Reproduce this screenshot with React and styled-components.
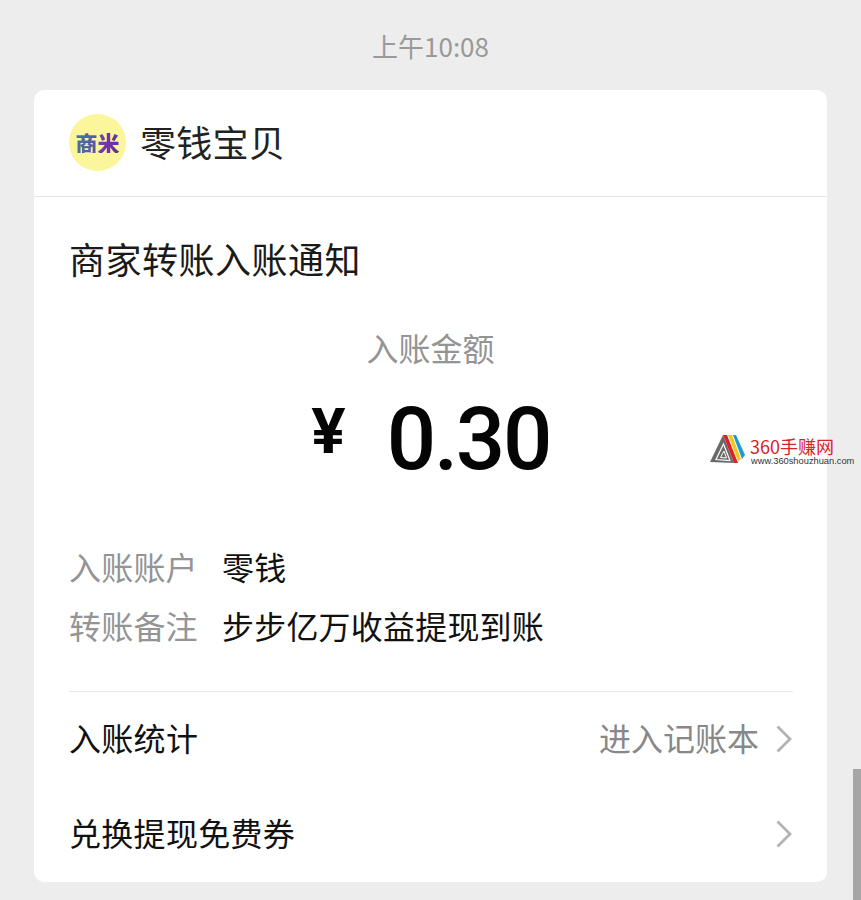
import React from "react";
import styled, { createGlobalStyle } from "styled-components";

const Global = createGlobalStyle`
  html, body { margin: 0; padding: 0; background: #ededed; }
  body { font-family: "Noto Sans CJK SC", "Noto Sans", sans-serif; overflow: hidden; }
  * { box-sizing: border-box; }
`;
const Page = styled.div`
  position: relative; width: 861px; height: 900px; overflow: hidden;
  background: #ededed; display: flex; flex-direction: column; padding: 0 34px;
`;
const Time = styled.div`
  height: 90px; padding-top: 26px; text-align: center; font-size: 26px; line-height: 40px;
  color: #999; font-weight: 400;
`;
const Card = styled.section`
  width: 793px; height: 792px; background: #fff; border-radius: 10px; display: flex; flex-direction: column;
`;
const Header = styled.header`
  height: 107px; display: flex; align-items: center; gap: 15px; padding: 0 35px 1px;
  border-bottom: 1px solid #e6e6e6;
`;
const Avatar = styled.div`
  width: 57px; height: 57px; border-radius: 50%; background: #fbf59b; display: flex;
  align-items: center; justify-content: center; font-size: 22px; font-weight: 900; line-height: 1;
  padding-bottom: 2px;
  span {
    background: linear-gradient(100deg, #3f7a99 0%, #5a57a8 45%, #7a2fa8 70%, #4a3aa0 100%);
    -webkit-background-clip: text; background-clip: text; color: transparent;
  }
`;
const Name = styled.div`
  font-size: 36px; line-height: 44px; color: #222; font-weight: 400; letter-spacing: 0.3px;
  margin-top: -3px; margin-left: -1px;
`;
const Body = styled.div`
  padding: 0 35px; display: flex; flex-direction: column; flex: 1;
`;
const Title = styled.h2`
  margin: 38px 0 0; font-size: 36px; line-height: 46px; font-weight: 400; color: #1a1a1a; height: 46px;
  letter-spacing: 0.5px;
`;
const AmountLabel = styled.div`
  margin-top: 43px; text-align: center; font-size: 32px; line-height: 46px; font-weight: 400; color: #949494;
`;
const Amount = styled.div`
  margin-top: 21px; height: 96px; display: flex; justify-content: center; align-items: center; color: #050505;
`;
const Yen = styled.span`
  font-family: Inter, "Liberation Sans", sans-serif;
  font-size: 62px; font-weight: 700; line-height: 1; width: 76px; position: relative; top: -8px;
`;
const Value = styled.span`
  font-family: Roboto, "Liberation Sans", sans-serif;
  font-size: 87px; font-weight: 500; line-height: 96px; letter-spacing: -2.2px;
`;
const Details = styled.dl`
  margin: 56px 0 0; display: grid; grid-template-columns: 153px 1fr; row-gap: 13px;
  font-size: 32px; line-height: 46px; letter-spacing: 0.2px;
  dt { color: #949494; font-weight: 400; }
  dd { margin: 0; color: #111; font-weight: 400; }
`;
const Divider = styled.hr`
  margin: 43px 0 0; border: 0; border-top: 1px solid #e8e8e8; width: 724px;
`;
const Row = styled.div`
  height: ${p => p.$h}px; display: flex; align-items: center; justify-content: space-between;
  font-size: 32px; color: #111; font-weight: 400; letter-spacing: 0.3px;
`;
const Right = styled.div`
  display: flex; align-items: center; gap: 17px; color: #888; letter-spacing: 0;
`;
const ChevronIcon = styled.svg`
  margin-top: 4px;
`;
const Chevron = () => (
  <ChevronIcon width="16" height="28" viewBox="0 0 16 28" fill="none">
    <path d="M1.5 1.5 L14 14 L1.5 26.5" stroke="#b3b3b3" strokeWidth="2.8" />
  </ChevronIcon>
);
const Scroll = styled.div`
  position: absolute; right: 0; top: 769px; width: 8px; height: 131px; background: #a6a6a6;
`;
const Mark = styled.div`
  position: absolute; left: 710px; top: 434px; display: flex; gap: 4px; align-items: flex-start;
`;
const MarkText = styled.div`
  display: flex; flex-direction: column; padding-top: 2px;
`;
const MarkTitle = styled.div`
  color: #d8232a; font-size: 18px; line-height: 20px;
  font-family: "Noto Sans CJK SC", sans-serif; font-weight: 400; white-space: nowrap;
`;
const MarkUrl = styled.div`
  color: #333; font-size: 9.3px; line-height: 11px; font-family: "Liberation Sans", sans-serif; margin-left: 1px; white-space: nowrap;
`;

export default function App() {
  return (
    <Page>
      <Global />
      <Time>上午10:08</Time>
      <Card>
        <Header>
          <Avatar><span>商米</span></Avatar>
          <Name>零钱宝贝</Name>
        </Header>
        <Body>
          <Title>商家转账入账通知</Title>
          <AmountLabel>入账金额</AmountLabel>
          <Amount><Yen>¥</Yen><Value>0.30</Value></Amount>
          <Details>
            <dt>入账账户</dt><dd>零钱</dd>
            <dt>转账备注</dt><dd>步步亿万收益提现到账</dd>
          </Details>
          <Divider />
          <Row $h={90}>入账统计<Right>进入记账本<Chevron /></Right></Row>
          <Row $h={100}>兑换提现免费券<Right><Chevron /></Right></Row>
        </Body>
      </Card>
      <Mark>
        <svg width="36" height="31" viewBox="0 0 36 31">
          <path d="M0 28 L13 1 L24 29 Z" fill="#6a6a6a" />
          <path d="M6 25.5 L13.5 10 L20 26.5 Z" fill="none" stroke="#fff" strokeWidth="1.2" />
          <path d="M10.5 23.5 L14 17 L16.5 24 Z" fill="none" stroke="#fff" strokeWidth="1" />
          <path d="M13 1 L17 1 L28 29 L24 29 Z" fill="#d8232a" />
          <path d="M18 1 L22 1 L31 25 L28 27 Z" fill="#f2c81e" />
          <path d="M23 1 L26 1 L35 21 L32 25 Z" fill="#1e9ad6" />
        </svg>
        <MarkText>
          <MarkTitle>360手赚网</MarkTitle>
          <MarkUrl>www.360shouzhuan.com</MarkUrl>
        </MarkText>
      </Mark>
      <Scroll />
    </Page>
  );
}
